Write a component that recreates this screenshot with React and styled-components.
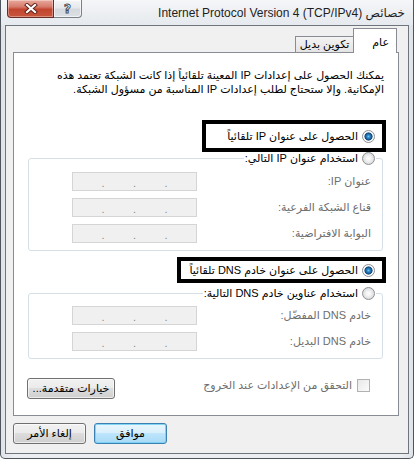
import React from 'react'
import styled, { createGlobalStyle } from 'styled-components'

const GlobalStyle = createGlobalStyle`
  html, body {
    margin: 0;
    padding: 0;
  }
  body {
    width: 414px;
    height: 459px;
    overflow: hidden;
    font-family: 'Liberation Sans', 'DejaVu Sans', sans-serif;
    font-size: 11px;
    color: #000;
  }
  * {
    box-sizing: border-box;
  }
`

const Window = styled.div`
  width: 414px;
  height: 459px;
  display: flex;
  flex-direction: column;
  border: 1px solid #4f555c;
  border-top: none;
  border-radius: 0 0 5px 5px;
  background: linear-gradient(90deg, #dfe3e8, #eceef1 3%, #eceef1 97%, #dfe3e8);
  padding: 0 4px 4px;
`

const TitleBar = styled.div`
  height: 25px;
  flex: none;
  display: flex;
  align-items: flex-start;
  margin: 0 -4px;
  padding: 0 8px 0 6px;
  background: linear-gradient(#f4f6f8, #e6e9ed);
`

const CaptionButtons = styled.div`
  display: flex;
`

const CloseButton = styled.div`
  width: 47px;
  height: 18px;
  display: flex;
  align-items: center;
  justify-content: center;
  border: 1px solid #6b2b24;
  border-top: none;
  border-radius: 0 0 0 4px;
  background: linear-gradient(#e9a99c 0%, #d67b6b 40%, #c2452f 55%, #c8553d 100%);
  box-shadow: inset 0 0 0 1px rgba(255, 255, 255, 0.35);
`

const HelpButton = styled.div`
  width: 28px;
  height: 18px;
  display: flex;
  align-items: center;
  justify-content: center;
  border: 1px solid #7a8088;
  border-top: none;
  border-left: none;
  border-radius: 0 0 4px 0;
  background: linear-gradient(#f5f6f7 0%, #e6e8eb 45%, #d5d9de 55%, #dde1e5 100%);
  box-shadow: inset 0 0 0 1px rgba(255, 255, 255, 0.6);
`

const HelpGlyph = styled.span`
  font-family: 'DejaVu Sans', sans-serif;
  font-weight: bold;
  font-size: 12px;
  line-height: 1;
  color: #fff;
  -webkit-text-stroke: 1px #4a4f55;
`

const Title = styled.div`
  margin-left: auto;
  margin-top: 6px;
  font-family: 'Liberation Sans', 'DejaVu Sans', sans-serif;
  font-size: 12px;
  line-height: 14px;
  color: #1e1e1e;
  white-space: nowrap;
`

const Client = styled.div`
  flex: 1;
  display: flex;
  flex-direction: column;
  direction: rtl;
  background: #f0f0f0;
  border: 1px solid #6f757c;
  padding: 2px 9px 0 7px;
`

const TabStrip = styled.div`
  height: 24px;
  flex: none;
  display: flex;
  align-items: flex-end;
  padding-right: 2px;
  position: relative;
  z-index: 1;
`

const Tab = styled.div`
  display: flex;
  white-space: nowrap;
  border: 1px solid #898c95;
  border-bottom: none;
  ${p =>
    p.$active
      ? `
    width: 44px;
    height: 25px;
    align-items: flex-end;
    margin-bottom: -1px;
    padding: 0 7px 4px 0;
    background: #fff;
  `
      : `
    width: 58px;
    height: 16px;
    align-items: center;
    justify-content: center;
    border-right: none;
    padding-bottom: 1px;
    background: linear-gradient(#f3f3f3, #e4e4e4);
  `}
`

const Panel = styled.div`
  flex: 1;
  display: flex;
  flex-direction: column;
  align-items: flex-start;
  background: #fff;
  border: 1px solid #898c95;
  padding-top: 15px;
`

const Description = styled.p`
  margin: 0 14px 0 0;
  line-height: 14px;
  white-space: nowrap;
`

const Highlight = styled.div`
  width: ${p => p.$w}px;
  height: ${p => p.$h}px;
  margin: ${p => p.$top}px 12px 0 0;
  border: 4px solid #000;
  display: flex;
  align-items: center;
  gap: 4px;
  padding-right: 7px;
  white-space: nowrap;
  position: relative;
  z-index: 1;
`

const Radio = styled.span`
  flex: none;
  width: 13px;
  height: 13px;
  border-radius: 50%;
  border: 1px solid #8e9094;
  background: ${p =>
    p.$checked
      ? 'radial-gradient(circle, #6cc3ef 0, #2b86c6 1.6px, #124f86 3.4px, #1a4d7a 3.8px, #e9eef2 4.3px, #ffffff 5px)'
      : 'radial-gradient(circle, #ffffff 0, #f2f2f2 2.5px, #d9dadc 6px)'};
`

const Group = styled.fieldset`
  width: 355px;
  margin: ${p => p.$top}px 15px 0 0;
  padding: ${p => p.$pt}px 6px 7px;
  border: 1px solid #d5dfe5;
  border-radius: 3px;
  display: flex;
  flex-direction: column;
  gap: 7px;
`

const Legend = styled.legend`
  display: flex;
  align-items: center;
  gap: 4px;
  padding: 0 1px;
  line-height: 14px;
  height: 14px;
  background: #fff;
  white-space: nowrap;
`

const FieldRow = styled.div`
  display: grid;
  grid-template-columns: 1fr 125px;
  align-items: center;
  padding: 0 5px 0 37px;
`

const FieldLabel = styled.span`
  color: #6d6d6d;
  white-space: nowrap;
`

const IpBox = styled.div`
  direction: ltr;
  height: 19px;
  display: flex;
  align-items: flex-end;
  padding: 0 0 2px;
  background: #f0f0f0;
  border: 1px solid #d5d5d5;
`

const Octet = styled.span`
  flex: 1;
`

const Dot = styled.span`
  flex: none;
  color: #8a8a8a;
  line-height: 10px;
`

const BottomRow = styled.div`
  align-self: stretch;
  display: flex;
  justify-content: space-between;
  align-items: flex-start;
  margin-top: 19px;
  padding: 0 28px 0 13px;
`

const CheckLabel = styled.label`
  display: flex;
  align-items: center;
  gap: 5px;
  margin-top: 1px;
  color: #6d6d6d;
  white-space: nowrap;
`

const Checkbox = styled.span`
  width: 13px;
  height: 13px;
  border: 1px solid #b1b1b1;
  background: linear-gradient(135deg, #e8e8e8, #fbfbfb);
`

const Button = styled.button`
  height: 21px;
  width: ${p => p.$w}px;
  padding: 0;
  font: inherit;
  color: #000;
  white-space: nowrap;
  border: 1px solid ${p => (p.$primary ? '#3c7fb1' : '#707070')};
  border-radius: 3px;
  background: ${p =>
    p.$primary
      ? 'linear-gradient(#eaf6fd 0%, #d9f0fc 45%, #bee6fd 50%, #a7d9f5 100%)'
      : 'linear-gradient(#f2f2f2 0%, #ebebeb 45%, #dddddd 50%, #cfcfcf 100%)'};
  box-shadow: inset 0 0 0 1px
    ${p => (p.$primary ? 'rgba(120, 210, 245, 0.9)' : 'rgba(255, 255, 255, 0.6)')};
`

const Footer = styled.div`
  flex: none;
  display: flex;
  justify-content: flex-end;
  gap: 8px;
  padding: 7px 0 9px;
`

const IpField = () => (
  <IpBox>
    <Octet />
    <Dot>.</Dot>
    <Octet />
    <Dot>.</Dot>
    <Octet />
    <Dot>.</Dot>
    <Octet />
  </IpBox>
)

const Field = ({ label }) => (
  <FieldRow>
    <FieldLabel>{label}</FieldLabel>
    <IpField />
  </FieldRow>
)

const CloseIcon = () => (
  <svg width='14' height='11' viewBox='0 0 14 11'>
    <path d='M3 2 L11 9 M11 2 L3 9' stroke='#5c1f18' strokeWidth='4' strokeLinecap='square' />
    <path d='M3 2 L11 9 M11 2 L3 9' stroke='#fff' strokeWidth='2.2' strokeLinecap='square' />
  </svg>
)

const App = () => (
  <>
    <GlobalStyle />
    <Window>
      <TitleBar>
        <CaptionButtons>
          <CloseButton>
            <CloseIcon />
          </CloseButton>
          <HelpButton>
            <HelpGlyph>?</HelpGlyph>
          </HelpButton>
        </CaptionButtons>
        <Title dir='rtl'>خصائص Internet Protocol Version 4 (TCP/IPv4)&lrm;</Title>
      </TitleBar>
      <Client dir='rtl'>
        <TabStrip>
          <Tab $active>عام</Tab>
          <Tab>تكوين بديل</Tab>
        </TabStrip>
        <Panel>
          <Description>
            يمكنك الحصول على إعدادات IP المعينة تلقائياً إذا كانت الشبكة تعتمد هذه
            <br />
            الإمكانية. وإلا ستحتاج لطلب إعدادات IP المناسبة من مسؤول الشبكة.
          </Description>
          <Highlight $w={184} $h={32} $top={24}>
            <Radio $checked />
            الحصول على عنوان IP تلقائياً
          </Highlight>
          <Group $top={-1} $pt={7}>
            <Legend>
              <Radio />
              استخدام عنوان IP التالي:
            </Legend>
            <Field label='عنوان IP:' />
            <Field label='قناع الشبكة الفرعية:' />
            <Field label='البوابة الافتراضية:' />
          </Group>
          <Highlight $w={209} $h={26} $top={6}>
            <Radio $checked />
            الحصول على عنوان خادم DNS تلقائياً
          </Highlight>
          <Group $top={3} $pt={6}>
            <Legend>
              <Radio />
              استخدام عناوين خادم DNS التالية:
            </Legend>
            <Field label='خادم DNS المفضّل:' />
            <Field label='خادم DNS البديل:' />
          </Group>
          <BottomRow>
            <CheckLabel>
              <Checkbox />
              التحقق من الإعدادات عند الخروج
            </CheckLabel>
            <Button $w={88}>خيارات متقدمة...</Button>
          </BottomRow>
        </Panel>
        <Footer>
          <Button $w={73} $primary>
            موافق
          </Button>
          <Button $w={73}>إلغاء الأمر</Button>
        </Footer>
      </Client>
    </Window>
  </>
)

export default App
